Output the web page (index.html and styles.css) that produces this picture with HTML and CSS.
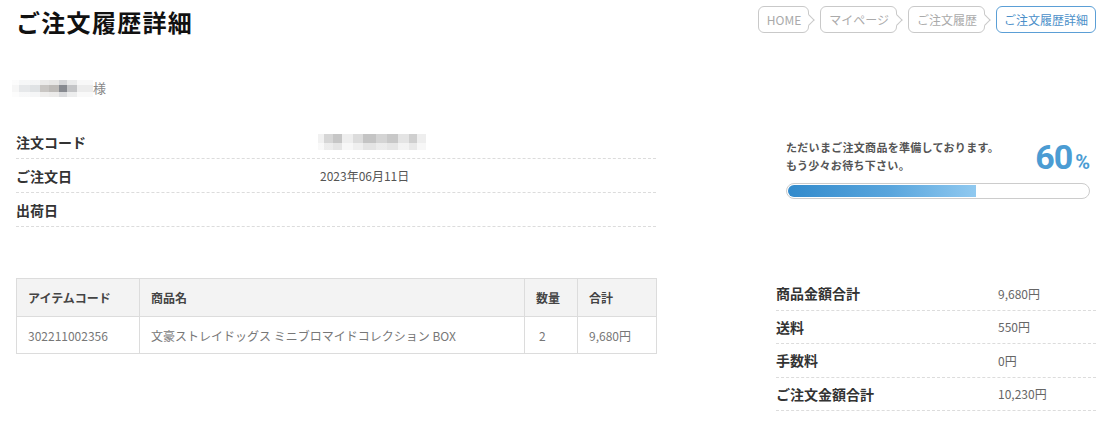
FILE: index.html
```html
<!DOCTYPE html>
<html lang="ja">
<head>
<meta charset="utf-8">
<title>ご注文履歴詳細</title>
<link rel="stylesheet" href="styles.css">
</head>
<body>
<header class="top">
  <h1 class="title">ご注文履歴詳細</h1>
  <nav class="crumbs">
    <a class="crumb tail">HOME</a>
    <a class="crumb tail">マイページ</a>
    <a class="crumb tail">ご注文履歴</a>
    <a class="crumb current">ご注文履歴詳細</a>
  </nav>
</header>

<p class="customer"><span class="blur blur-name"></span><span class="sama">様</span></p>

<section class="row-section first">
  <div class="info">
    <div class="info-row"><span class="info-label">注文コード</span><span class="info-value"><span class="blur blur-code"></span></span></div>
    <div class="info-row"><span class="info-label">ご注文日</span><span class="info-value">2023年06月11日</span></div>
    <div class="info-row"><span class="info-label">出荷日</span><span class="info-value"></span></div>
  </div>
  <div class="side">
    <div class="progress">
      <div class="progress-head">
        <p class="progress-text">ただいまご注文商品を準備しております。<br>もう少々お待ち下さい。</p>
        <p class="progress-num">60<span class="pct">%</span></p>
      </div>
      <div class="bar"><div class="bar-fill" style="width:62.5%"></div></div>
    </div>
  </div>
</section>

<section class="row-section second">
  <table class="items">
    <thead>
      <tr>
        <th class="c-code">アイテムコード</th>
        <th class="c-name">商品名</th>
        <th class="c-qty">数量</th>
        <th class="c-sum">合計</th>
      </tr>
    </thead>
    <tbody>
      <tr>
        <td>302211002356</td>
        <td>文豪ストレイドッグス ミニブロマイドコレクション BOX</td>
        <td class="qty">2</td>
        <td>9,680円</td>
      </tr>
    </tbody>
  </table>
  <div class="side summary">
    <div class="sum-row"><span class="sum-label">商品金額合計</span><span class="sum-value">9,680円</span></div>
    <div class="sum-row"><span class="sum-label">送料</span><span class="sum-value">550円</span></div>
    <div class="sum-row"><span class="sum-label">手数料</span><span class="sum-value">0円</span></div>
    <div class="sum-row"><span class="sum-label">ご注文金額合計</span><span class="sum-value">10,230円</span></div>
  </div>
</section>
</body>
</html>
```

FILE: styles.css
```css
* { box-sizing: border-box; }

body {
  margin: 0;
  padding: 0 15px 0 16px;
  font-family: "Noto Sans CJK JP", "Noto Sans", sans-serif;
  color: #333;
  background: #fff;
}

p { margin: 0; }

.top {
  display: flex;
  justify-content: space-between;
  align-items: flex-start;
  padding-top: 4px;
}

.title {
  margin: 0;
  font-size: 24px;
  line-height: 36px;
  font-weight: 700;
  letter-spacing: 1.3px;
  color: #111;
}

.crumbs {
  display: flex;
  gap: 11px;
  margin-top: 2px;
}

.crumb {
  position: relative;
  display: flex;
  align-items: center;
  height: 27px;
  padding: 0 7px 0 8px;
  border: 1px solid #c9c9c9;
  border-radius: 6px;
  font-size: 12px;
  color: #aaa;
  background: #fff;
  text-decoration: none;
}

.crumb.tail::after {
  content: "";
  position: absolute;
  right: -5px;
  top: 50%;
  width: 7px;
  height: 7px;
  margin-top: -4px;
  background: #fff;
  border-top: 1px solid #c9c9c9;
  border-right: 1px solid #c9c9c9;
  transform: rotate(45deg);
}

.crumb.current {
  border-color: #5b9fd6;
  color: #4b8fc9;
  padding: 0 7px;
}

.customer {
  display: flex;
  align-items: center;
  margin-top: 38px;
  height: 20px;
  font-size: 13px;
  color: #888;
}

.blur { display: inline-block; }

.blur-name {
  width: 81px;
  height: 17px;
  margin-left: -4px;
  background:
    linear-gradient(180deg, rgba(255,255,255,.65) 0 28%, rgba(255,255,255,0) 28% 72%, rgba(255,255,255,.7) 72%),
    linear-gradient(90deg, #f6f6f6 0 9%, #e6e8ea 9% 22%, #dfe2e4 22% 34%, #c9c6c3 34% 46%, #bebbb8 46% 58%, #878a90 58% 68%, #c4c5c7 68% 80%, #ececec 80% 100%);
}

.sama { line-height: 20px; }

.row-section {
  display: flex;
  justify-content: space-between;
  align-items: flex-start;
}

.row-section.first { margin-top: 27px; }
.row-section.second { margin-top: 51px; }

.info { width: 640px; }

.info-row {
  display: flex;
  align-items: center;
  height: 34px;
  border-bottom: 1px dashed #dcdcdc;
}

.info-label {
  width: 304px;
  font-size: 14px;
  font-weight: 700;
  color: #333;
}

.info-value {
  font-size: 12px;
  color: #555;
  display: flex;
  align-items: center;
}

.blur-code {
  width: 108px;
  height: 16px;
  margin-left: -2px;
  background:
    linear-gradient(180deg, rgba(255,255,255,0) 0 55%, rgba(255,255,255,.55) 55%),
    linear-gradient(90deg, #f1f1f1 0 6%, #d6d6d6 6% 14%, #c6c6c6 14% 22%, #eeeeee 22% 32%, #dcdcdc 32% 42%, #c4c4c4 42% 54%, #d4d4d4 54% 64%, #c8c8c8 64% 74%, #e4e4e4 74% 84%, #cfcfcf 84% 92%, #eeeeee 92% 100%);
}

.side { width: 320px; }

.summary { margin-top: -1px; }

.progress {
  padding: 13px 6px 0 10px;
}

.progress-head {
  display: flex;
  justify-content: space-between;
  align-items: flex-end;
}

.progress-text {
  font-size: 11px;
  line-height: 18px;
  font-weight: 700;
  letter-spacing: 0.3px;
  color: #555;
}

.progress-num {
  font-family: "Roboto", "Noto Sans", sans-serif;
  font-size: 34px;
  line-height: 30px;
  font-weight: 700;
  letter-spacing: -1px;
  color: #4b9cd3;
  margin-bottom: -3px;
}

.pct {
  font-size: 20px;
  margin-left: 3px;
  letter-spacing: 0;
}

.bar {
  margin-top: 9px;
  height: 16px;
  padding: 1px;
  border: 1px solid #cccccc;
  border-radius: 9px;
  background: #fff;
}

.bar-fill {
  height: 100%;
  border-radius: 7px 0 0 7px;
  background: linear-gradient(90deg, #338bcc 0%, #5aa6dd 55%, #90c9f0 100%);
}

.items {
  width: 640px;
  border-collapse: collapse;
  table-layout: fixed;
  border: 1px solid #dcdcdc;
  font-size: 12px;
}

.items th,
.items td {
  border: 1px solid #dcdcdc;
  text-align: left;
  padding: 0 11px;
}

.items th {
  height: 38px;
  background: #f3f3f3;
  font-weight: 700;
  color: #444;
}

.items td {
  height: 37px;
  color: #777;
}

.items td.qty { padding-left: 14px; }

.c-code { width: 123px; }
.c-name { width: 385px; }
.c-qty { width: 53px; }
.c-sum { width: 79px; }

.sum-row {
  display: flex;
  align-items: center;
  height: 33.5px;
  border-bottom: 1px dashed #dcdcdc;
}

.sum-label {
  width: 222px;
  font-size: 14px;
  font-weight: 700;
  color: #333;
}

.sum-value {
  font-size: 12px;
  color: #666;
}
```
